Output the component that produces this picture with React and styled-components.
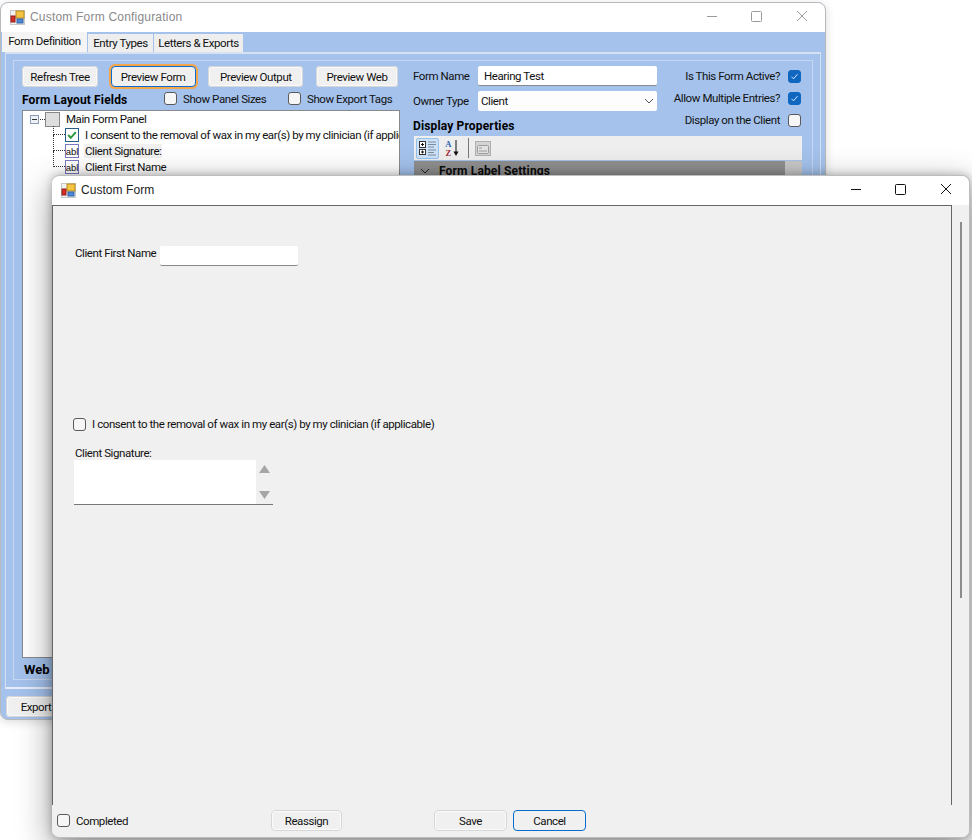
import React from 'react';
import styled, { createGlobalStyle } from 'styled-components';

const GlobalStyle = createGlobalStyle`
  html, body {
    margin: 0;
    background: #fff;
  }
  body {
    font-family: Roboto, "Liberation Sans", Arial, sans-serif;
    font-size: 11.5px;
    letter-spacing: -0.42px;
    color: #111;
  }
`;

const Desktop = styled.div`
  position: relative;
  width: 972px;
  height: 840px;
  overflow: hidden;
  background: #fff;
`;

const Win = styled.div`
  position: absolute;
  display: flex;
  flex-direction: column;
  box-sizing: border-box;
  overflow: hidden;
  border-radius: 8px;
`;

const BackWindow = styled(Win)`
  left: 0;
  top: 2px;
  width: 826px;
  height: 718px;
  background: #a4c2ec;
  border: 1px solid #b9b9b9;
  box-shadow: 0 2px 10px rgba(0, 0, 0, 0.15);
`;

const FrontWindow = styled(Win)`
  left: 52px;
  top: 175px;
  width: 918px;
  height: 663px;
  background: #f0f0f0;
  border: 1px solid #bdbdbd;
  border-left: 0;
  box-shadow: 0 10px 34px rgba(0, 0, 0, 0.42), 0 0 8px rgba(0, 0, 0, 0.25);
`;

const TitleBar = styled.div`
  display: flex;
  align-items: center;
  flex: none;
  box-sizing: border-box;
  height: 29px;
  background: #fff;
  padding-left: 9px;
`;

const TitleText = styled.span`
  margin: 0 0 2px 5px;
  font-family: "Liberation Sans", Arial, sans-serif;
  font-size: 12px;
  letter-spacing: ${(p) => (p.$dim ? '0.2px' : '0.05px')};
  color: ${(p) => (p.$dim ? '#8a8a8a' : '#222')};
`;

const Controls = styled.div`
  display: flex;
  margin: 0 0 3px auto;
  padding-right: 17px;
  gap: 33px;
  color: ${(p) => (p.$dim ? '#9a9a9a' : '#111')};
`;

const Tabs = styled.div`
  display: flex;
  align-items: flex-end;
  flex: none;
  height: 20px;
  padding-left: 1px;
`;

const Tab = styled.div`
  display: flex;
  align-items: center;
  justify-content: center;
  box-sizing: border-box;
  height: ${(p) => (p.$active ? 20 : 18)}px;
  width: ${(p) => p.$w}px;
  margin-right: 1px;
  background: ${(p) => (p.$active ? '#f4f4f4' : '#eeeeee')};
  padding-bottom: ${(p) => (p.$active ? 3 : 0)}px;
`;

const Pane = styled.div`
  box-sizing: border-box;
  flex: none;
  margin: 0 4px;
  height: 637px;
  padding: 6px 7px;
  border: 1px solid #d3e0f3;
  border-top: 2px solid #d6e2f4;
  border-bottom: 2px solid #e6eef9;
`;

const GroupBox = styled.div`
  display: flex;
  box-sizing: border-box;
  height: 620px;
  padding: 5px 12px 0 8px;
  gap: 13px;
  border: 1px solid #c6d7ef;
`;

const LeftColumn = styled.div`
  display: flex;
  flex-direction: column;
  width: 378px;
  flex: none;
`;

const ButtonRow = styled.div`
  display: flex;
  align-items: center;
  justify-content: space-between;
  height: 21px;
  padding-right: 2px;
  flex: none;
`;

const Button = styled.div`
  display: flex;
  align-items: center;
  justify-content: center;
  box-sizing: border-box;
  width: ${(p) => p.$w}px;
  height: 21px;
  flex: none;
  margin-left: ${(p) => p.$ml || 0}px;
  border-radius: 4px;
  background: #f0f0f0;
  border: ${(p) => (p.$focus ? '1px solid #0a6ccf' : '2px solid #fafafa')};
  box-shadow: ${(p) => (p.$ring ? '0 0 0 2px #f5a54a' : 'none')};
  outline: ${(p) => (p.$focus ? 'none' : '1px solid #d6d6d6')};
  outline-offset: -1px;
`;

const OptionsRow = styled.div`
  display: flex;
  align-items: center;
  height: 23px;
  flex: none;
`;

const Bold = styled.span`
  font-size: 12px;
  font-weight: 700;
  letter-spacing: 0.15px;
  color: #000;
  white-space: nowrap;
`;

const OptionsTitle = styled(Bold)`
  width: 142px;
  flex: none;
  padding-top: 2px;
`;

const CheckLabel = styled.label`
  display: flex;
  align-items: center;
  gap: 6px;
  white-space: nowrap;
  width: ${(p) => p.$w}px;
  flex: none;
`;

const Box = styled.span`
  display: inline-flex;
  align-items: center;
  justify-content: center;
  box-sizing: border-box;
  width: 13px;
  height: 13px;
  flex: none;
  border-radius: 3px;
  background: ${(p) => (p.$on ? '#0f67c0' : '#f6f6f6')};
  border: 1px solid ${(p) => (p.$on ? '#0f67c0' : '#5a5a5a')};
`;

const Tree = styled.div`
  box-sizing: border-box;
  flex: none;
  height: 548px;
  background: #fff;
  border: 1px solid #8a8a8a;
  overflow: hidden;
`;

const RootRow = styled.div`
  display: flex;
  align-items: center;
  height: 16px;
  padding-left: 7px;
  white-space: nowrap;
`;

const ExpanderBox = styled.span`
  display: flex;
  align-items: center;
  justify-content: center;
  box-sizing: border-box;
  width: 9px;
  height: 9px;
  border: 1px solid #8b9bb5;
  background: #eef1f6;
  &::after {
    content: '';
    width: 5px;
    height: 1px;
    background: #333;
  }
`;

const Connector = styled.span`
  width: 5px;
  border-top: 1px dotted #333;
  margin-left: 1px;
`;

const RootLabel = styled.span`
  margin-left: 6px;
`;

const ChildRow = styled.div`
  position: relative;
  display: flex;
  align-items: center;
  height: 16px;
  padding-left: 42px;
  white-space: nowrap;
  & > svg {
    flex: none;
  }
  &::before {
    content: '';
    position: absolute;
    left: 30px;
    top: ${(p) => (p.$first ? '-1px' : '-8px')};
    height: ${(p) => (p.$first ? '8px' : '15px')};
    width: 11px;
    border-left: 1px dotted #333;
    border-bottom: 1px dotted #333;
  }
`;

const ChildLabel = styled.span`
  margin-left: 5px;
  padding: 0 1px;
  background: ${(p) => (p.$selected ? '#f0f0f0' : 'transparent')};
`;

const TreeSpacer = styled.div`
  height: 512px;
`;

const WebRow = styled.div`
  display: flex;
  align-items: center;
  height: 24px;
  padding: 2px 0 0 2px;
  font-weight: 700;
  font-size: 13px;
  letter-spacing: 0;
  color: #000;
`;

const RightColumn = styled.div`
  display: flex;
  flex-direction: column;
  width: 389px;
  flex: none;
`;

const TopBlock = styled.div`
  display: flex;
  justify-content: space-between;
  height: 70px;
  flex: none;
`;

const FieldsColumn = styled.div`
  display: flex;
  flex-direction: column;
  align-items: stretch;
  width: 244px;
`;

const FieldRow = styled.div`
  display: flex;
  align-items: center;
  justify-content: space-between;
  height: 20px;
  margin-bottom: 5px;
`;

const PropertiesTitle = styled(Bold)`
  margin-top: 3px;
`;

const TextInput = styled.div`
  display: flex;
  align-items: center;
  justify-content: space-between;
  box-sizing: border-box;
  width: 179px;
  height: 20px;
  padding: 0 6px;
  background: #fff;
  border-bottom: 1px solid #8a8a8a;
  border-radius: 2px;
`;

const SelectInput = styled(TextInput)`
  padding: 0 3px;
  border-bottom: 0;
  background: #fdfdfd;
`;

const ChecksColumn = styled.div`
  display: flex;
  flex-direction: column;
  align-items: flex-end;
  gap: 8px;
  padding: 3px 1px 0 0;
`;

const CheckRight = styled.div`
  display: flex;
  align-items: center;
  gap: 8px;
  height: 14px;
`;

const GridToolbar = styled.div`
  display: flex;
  align-items: center;
  flex: none;
  height: 24px;
  margin-left: 1px;
  padding-left: 2px;
  background: #eeeeee;
`;

const ToolButton = styled.span`
  display: flex;
  align-items: center;
  justify-content: center;
  box-sizing: border-box;
  width: ${(p) => p.$w}px;
  height: 21px;
  border-radius: 2px;
  background: ${(p) => (p.$active ? '#cde2f9' : 'transparent')};
  border: 1px solid ${(p) => (p.$active ? '#93c2ee' : 'transparent')};
`;

const ToolSep = styled.span`
  width: 1px;
  height: 20px;
  margin: 0 5px;
  background: #777;
`;

const CategoryRow = styled(Bold)`
  display: flex;
  align-items: center;
  flex: none;
  height: 20px;
  margin: 1px 0 0 1px;
  padding-left: 6px;
  background: #8f8f8f;
  color: #0b0b0b;
  gap: 9px;
`;

const CategoryThumb = styled.span`
  margin-left: auto;
  width: 17px;
  height: 100%;
  background: #c8c8c8;
`;

const ExportBar = styled.div`
  display: flex;
  padding: 7px 0 0 5px;
`;

const FormBody = styled.div`
  display: flex;
  flex: none;
  height: 600px;
`;

const FormPanel = styled.div`
  box-sizing: border-box;
  flex: none;
  width: 900px;
  height: 600px;
  background: #f0f0f0;
  border: 1px solid #666;
  border-bottom: 0;
  padding-top: 40px;
`;

const ScrollColumn = styled.div`
  flex: 1;
  padding: 17px 0 0 8px;
`;

const ScrollThumb = styled.div`
  width: 2px;
  height: 376px;
  background: #8c8c8c;
`;

const NameField = styled.div`
  display: flex;
  align-items: center;
  height: 20px;
  margin-left: 22px;
`;

const NameLabel = styled.span`
  width: 85px;
  flex: none;
  padding-bottom: 7px;
  white-space: nowrap;
`;

const NameInput = styled.div`
  width: 138px;
  height: 19px;
  background: #fff;
  border-bottom: 1px solid #8a8a8a;
  border-radius: 2px;
`;

const ConsentRow = styled.div`
  display: flex;
  align-items: center;
  margin: 151px 0 0 20px;
  gap: 6px;
  height: 14px;
`;

const SignatureLabel = styled.div`
  margin: 15px 0 0 22px;
  height: 14px;
  line-height: 14px;
`;

const SignatureBox = styled.div`
  display: flex;
  justify-content: flex-end;
  box-sizing: border-box;
  width: 199px;
  height: 45px;
  margin-left: 21px;
  background: #fff;
  border-bottom: 1px solid #777;
`;

const SpinColumn = styled.div`
  display: flex;
  flex-direction: column;
  align-items: center;
  justify-content: space-between;
  width: 17px;
  padding: 5px 0;
  box-sizing: border-box;
  background: #f0f0f0;
`;

const Footer = styled.div`
  display: flex;
  align-items: center;
  flex: none;
  box-sizing: border-box;
  height: 33px;
  padding: 0 0 2px 5px;
  background: #f0f0f0;
`;

const ScrollStub = styled.div`
  display: flex;
  align-items: center;
  gap: 6px;
  height: 14px;
  padding-left: 5px;
  background: #f0f0f0;
`;

const ScrollStubThumb = styled.span`
  width: 40px;
  height: 5px;
  border-radius: 3px;
  background: #8a8a8a;
`;

const FormIcon = () => (
  <svg width="15" height="15" viewBox="0 0 15 15">
    <rect x="0.5" y="0.5" width="14" height="14" fill="#f2f2f2" stroke="#c9c9c9" />
    <rect x="6" y="1" width="8" height="7" fill="#f4c542" stroke="#b9891c" />
    <rect x="1" y="6" width="4" height="6" fill="#d62f2a" stroke="#8e1c18" />
    <rect x="7" y="9" width="6" height="4" fill="#4f8ad8" stroke="#2c5ea3" />
  </svg>
);

const WindowGlyphs = () => (
  <>
    <svg width="12" height="12" viewBox="0 0 12 12">
      <path d="M1 6.5h10" stroke="currentColor" fill="none" />
    </svg>
    <svg width="12" height="12" viewBox="0 0 12 12">
      <rect x="0.5" y="1.5" width="10" height="10" rx="1" stroke="currentColor" fill="none" />
    </svg>
    <svg width="12" height="12" viewBox="0 0 12 12">
      <path d="M1 1l10 10M11 1L1 11" stroke="currentColor" fill="none" />
    </svg>
  </>
);

const Tick = () => (
  <svg width="9" height="9" viewBox="0 0 9 9">
    <path d="M1.5 4.8l2 2 4-4.6" stroke="#dbe9f8" strokeWidth="1" fill="none" />
  </svg>
);

const PanelIcon = () => (
  <svg width="15" height="15" viewBox="0 0 15 15">
    <rect x="1" y="1" width="13" height="13" fill="#dedede" />
    <rect x="0.5" y="0.5" width="14" height="14" fill="none" stroke="#111" strokeDasharray="1 1" />
  </svg>
);

const CheckIcon = () => (
  <svg width="14" height="14" viewBox="0 0 14 14">
    <rect x="0.5" y="0.5" width="13" height="13" fill="#fff" stroke="#2a5d85" />
    <path d="M3.2 7l2.6 2.8 5-5.6" stroke="#2e9a3e" strokeWidth="2" fill="none" />
  </svg>
);

const LabelIcon = () => (
  <svg width="14" height="14" viewBox="0 0 14 14">
    <rect x="0.5" y="0.5" width="13" height="13" fill="#fff" stroke="#7c79c0" />
    <text x="7" y="10.5" textAnchor="middle" fontSize="9.5" letterSpacing="0" fontFamily="Liberation Sans" fill="#111">abl</text>
  </svg>
);

const Chevron = ({ color = '#555' }) => (
  <svg width="10" height="6" viewBox="0 0 10 6">
    <path d="M1 1l4 4 4-4" stroke={color} strokeWidth="1" fill="none" />
  </svg>
);

const CategorizedIcon = () => (
  <svg width="18" height="16" viewBox="0 0 18 16">
    <rect x="0.5" y="1.5" width="6" height="6" fill="#fff" stroke="#333" />
    <rect x="0.5" y="9.5" width="6" height="5" fill="#fff" stroke="#333" />
    <path d="M2 4.5h3M3.5 3v3M2 12h3M3.5 10.5v3" stroke="#111" />
    <path d="M9 2h8M9 4.5h8M9 7h6M9 10h8M9 12.5h6M9 15h8" stroke="#7d8c9c" />
  </svg>
);

const SortIcon = () => (
  <svg width="17" height="18" viewBox="0 0 17 18">
    <text x="5" y="7.5" textAnchor="middle" fontSize="8.5" fontWeight="700" fontFamily="Liberation Serif" fill="#2a5fb0">A</text>
    <text x="5" y="17" textAnchor="middle" fontSize="8.5" fontWeight="700" fontFamily="Liberation Serif" fill="#a32a36">Z</text>
    <path d="M13 1v13" stroke="#111" />
    <path d="M10.5 12.5h5L13 17z" fill="#111" />
  </svg>
);

const PagesIcon = () => (
  <svg width="16" height="15" viewBox="0 0 16 15">
    <rect x="0.5" y="0.5" width="15" height="14" fill="#d4d4d4" stroke="#b0b0b0" />
    <rect x="2.5" y="4.5" width="11" height="8" rx="1" fill="#e2e2e2" stroke="#9c9c9c" />
    <path d="M4 7h3M4 10h8" stroke="#9c9c9c" />
  </svg>
);

const arrowPaths = {
  up: 'M5.5 0L11 8H0z',
  down: 'M0 0h11L5.5 8z',
  left: 'M8 0v8L3 4z',
};

const Arrow = ({ dir, color = '#a6a6a6' }) => (
  <svg width="11" height="8" viewBox="0 0 11 8">
    <path d={arrowPaths[dir]} fill={color} />
  </svg>
);

const App = () => {
  return (
    <Desktop>
      <GlobalStyle />
      <BackWindow>
        <TitleBar>
          <FormIcon />
          <TitleText $dim>Custom Form Configuration</TitleText>
          <Controls $dim>
            <WindowGlyphs />
          </Controls>
        </TitleBar>
        <Tabs>
          <Tab $active $w={85}>Form Definition</Tab>
          <Tab $w={65}>Entry Types</Tab>
          <Tab $w={89}>Letters &amp; Exports</Tab>
        </Tabs>
        <Pane>
          <GroupBox>
            <LeftColumn>
              <ButtonRow>
                <Button $w={76}>Refresh Tree</Button>
                <Button $focus $ring $w={85}>Preview Form</Button>
                <Button $w={95}>Preview Output</Button>
                <Button $w={82}>Preview Web</Button>
              </ButtonRow>
              <OptionsRow>
                <OptionsTitle>Form Layout Fields</OptionsTitle>
                <CheckLabel $w={124}>
                  <Box />
                  Show Panel Sizes
                </CheckLabel>
                <CheckLabel $w={110}>
                  <Box />
                  Show Export Tags
                </CheckLabel>
              </OptionsRow>
              <Tree>
                <RootRow>
                  <ExpanderBox />
                  <Connector />
                  <PanelIcon />
                  <RootLabel>Main Form Panel</RootLabel>
                </RootRow>
                <ChildRow $first>
                  <CheckIcon />
                  <ChildLabel>I consent to the removal of wax in my ear(s) by my clinician (if applicable)</ChildLabel>
                </ChildRow>
                <ChildRow>
                  <LabelIcon />
                  <ChildLabel $selected>Client Signature:</ChildLabel>
                </ChildRow>
                <ChildRow>
                  <LabelIcon />
                  <ChildLabel>Client First Name</ChildLabel>
                </ChildRow>
                <TreeSpacer />
                <ScrollStub>
                  <Arrow dir="left" color="#777" />
                  <ScrollStubThumb />
                </ScrollStub>
              </Tree>
              <WebRow>Web</WebRow>
            </LeftColumn>
            <RightColumn>
              <TopBlock>
                <FieldsColumn>
                  <FieldRow>
                    Form Name
                    <TextInput>Hearing Test</TextInput>
                  </FieldRow>
                  <FieldRow>
                    Owner Type
                    <SelectInput>
                      Client
                      <Chevron />
                    </SelectInput>
                  </FieldRow>
                  <PropertiesTitle>Display Properties</PropertiesTitle>
                </FieldsColumn>
                <ChecksColumn>
                  <CheckRight>
                    Is This Form Active?
                    <Box $on><Tick /></Box>
                  </CheckRight>
                  <CheckRight>
                    Allow Multiple Entries?
                    <Box $on><Tick /></Box>
                  </CheckRight>
                  <CheckRight>
                    Display on the Client
                    <Box />
                  </CheckRight>
                </ChecksColumn>
              </TopBlock>
              <GridToolbar>
                <ToolButton $active $w={23}><CategorizedIcon /></ToolButton>
                <ToolButton $w={24}><SortIcon /></ToolButton>
                <ToolSep />
                <ToolButton $w={18}><PagesIcon /></ToolButton>
              </GridToolbar>
              <CategoryRow>
                <Chevron color="#222" />
                Form Label Settings
                <CategoryThumb />
              </CategoryRow>
            </RightColumn>
          </GroupBox>
        </Pane>
        <ExportBar>
          <Button $w={60}>Export</Button>
        </ExportBar>
      </BackWindow>

      <FrontWindow>
        <TitleBar>
          <FormIcon />
          <TitleText>Custom Form</TitleText>
          <Controls>
            <WindowGlyphs />
          </Controls>
        </TitleBar>
        <FormBody>
          <FormPanel>
            <NameField>
              <NameLabel>Client First Name</NameLabel>
              <NameInput />
            </NameField>
            <ConsentRow>
              <Box />
              I consent to the removal of wax in my ear(s) by my clinician (if applicable)
            </ConsentRow>
            <SignatureLabel>Client Signature:</SignatureLabel>
            <SignatureBox>
              <SpinColumn>
                <Arrow dir="up" />
                <Arrow dir="down" />
              </SpinColumn>
            </SignatureBox>
          </FormPanel>
          <ScrollColumn>
            <ScrollThumb />
          </ScrollColumn>
        </FormBody>
        <Footer>
          <CheckLabel $w={214}>
            <Box />
            Completed
          </CheckLabel>
          <Button $w={71}>Reassign</Button>
          <Button $w={73} $ml={92}>Save</Button>
          <Button $focus $w={73} $ml={6}>Cancel</Button>
        </Footer>
      </FrontWindow>
    </Desktop>
  );
};

export default App;
